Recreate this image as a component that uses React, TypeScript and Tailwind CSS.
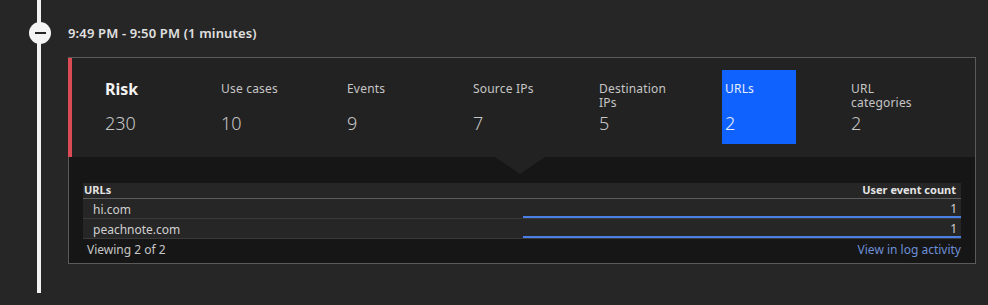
import React from "react"

const stats = [
  { label: "Use cases", value: "10" },
  { label: "Events", value: "9" },
  { label: "Source IPs", value: "7" },
  { label: "Destination IPs", value: "5" },
  { label: "URLs", value: "2", active: true },
  { label: "URL categories", value: "2" },
]

const rows = [
  { url: "hi.com", count: 1 },
  { url: "peachnote.com", count: 1 },
]

function StatBox({ label, value, active }: { label: string; value: string; active?: boolean }) {
  return (
    <div
      className={
        "flex flex-col w-[74px] h-[74px] px-[3px] pt-[12px] " + (active ? "bg-[#0f62fe] text-[#e8eefc]" : "text-[#c6c6c6]")
      }
    >
      <div className="text-[12px] leading-[14px] h-[30px] tracking-[0.2px]">{label}</div>
      <div className="text-[18px] leading-[22px] font-light">{value}</div>
    </div>
  )
}

export default function App() {
  return (
    <div
      className="w-[988px] h-[305px] bg-[#262626] flex overflow-hidden"
      style={{ fontFamily: '"Noto Sans", "Open Sans", sans-serif' }}
    >
      {/* timeline */}
      <div className="w-[68px] shrink-0 relative">
        <div className="absolute left-[37px] top-0 h-[293px] w-[4px] bg-[#f2f2f2]" />
        <div className="absolute left-[29px] top-[22px] w-[22px] h-[22px] rounded-full bg-[#f4f4f4] flex items-center justify-center">
          <div className="w-[11px] h-[2px] bg-[#262626]" />
        </div>
      </div>

      <div className="flex flex-col w-[908px]">
        <div className="h-[57px] flex items-center pt-[10px] text-[13px] tracking-[0.15px] font-semibold text-[#e0e0e0]">
          9:49 PM - 9:50 PM (1 minutes)
        </div>

        <div className="border border-[#5a5a5a] border-l-0 flex flex-col">
          {/* summary */}
          <div className="flex h-[99px] bg-[#222222] border-l-4 border-[#da4b55] pl-[30px] pt-[12px] gap-[52px]">
            <div className="flex flex-col w-[64px] h-[74px] px-[3px] pt-[10px] text-[#f4f4f4]">
              <div className="text-[16px] leading-[18px] font-bold h-[32px]">Risk</div>
              <div className="text-[18px] leading-[22px] font-light text-[#c6c6c6]">230</div>
            </div>
            {stats.map((s) => (
              <StatBox key={s.label} {...s} />
            ))}
          </div>

          {/* details */}
          <div className="bg-[#161616] border-l border-[#5a5a5a] relative px-[14px] pt-[26px] pb-[2px]">
            <div className="absolute left-[426px] top-0 w-0 h-0 border-l-[25px] border-r-[25px] border-t-[17px] border-l-transparent border-r-transparent border-t-[#222222]" />
            <div className="flex flex-col">
              <div className="flex justify-between items-center h-[16px] bg-[#262626] px-[1px] border-b border-[#5c5c5c] text-[11px] font-bold text-[#e4e4e4]">
                <span>URLs</span>
                <span className="pr-[4px]">User event count</span>
              </div>
              {rows.map((r) => (
                <div key={r.url} className="flex h-[20px] bg-[#262626] border-b border-[#3a3a3a] text-[12px] text-[#d0d0d0]">
                  <div className="w-[440px] pl-[10px] pt-[2px] flex items-center">{r.url}</div>
                  <div className="flex-1 flex flex-col justify-end">
                    <div className="text-right pr-[4px] leading-[15px]">{r.count}</div>
                    <div className="h-[2px] bg-[#4a7fe6]" />
                  </div>
                </div>
              ))}
              <div className="flex justify-between items-center h-[22px] text-[12px]">
                <span className="pl-[4px] text-[#c6c6c6]">Viewing 2 of 2</span>
                <span className="text-[#6d8fd6]">View in log activity</span>
              </div>
            </div>
          </div>
        </div>
      </div>
    </div>
  )
}
